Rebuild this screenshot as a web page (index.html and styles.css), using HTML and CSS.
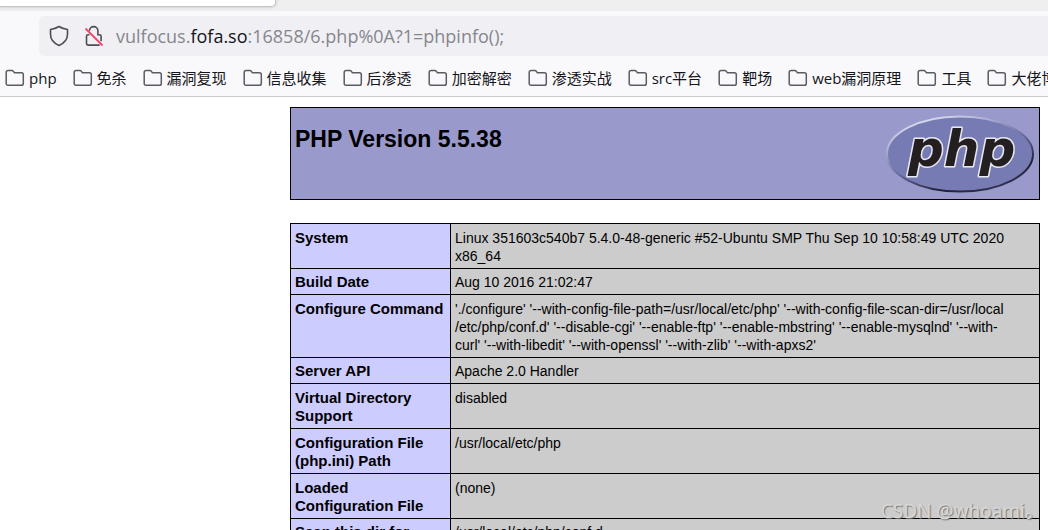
FILE: index.html
```html
<!DOCTYPE html>
<html lang="zh-CN">
<head>
<meta charset="utf-8">
<title>phpinfo()</title>
<link rel="stylesheet" href="styles.css">
</head>
<body>
<svg class="defs" aria-hidden="true">
  <symbol id="folder" viewBox="0 0 20 18">
    <path d="M3.200 1.500h3.600c.7 0 1.200.3 1.600.9l1 1.400h7.100c1.100 0 1.800.7 1.800 1.800v8.900c0 1.100-.7 1.800-1.800 1.800H3c-1.100 0-1.800-.7-1.800-1.800V3.300c0-1.100.7-1.800 2-1.800z" fill="none" stroke="#5b5b66" stroke-width="1.500"/>
  </symbol>
</svg>
<header class="browser">
  <div class="tabs"><div class="tab"></div></div>
  <div class="toolbar">
    <div class="address">
      <svg class="shield" viewBox="0 0 20 22" aria-hidden="true">
        <path d="M10 1.500C7.500 3.200 4.700 4.100 1.500 4.500v4.800c0 5 3 8.800 8.500 11.200 5.500-2.400 8.500-6.200 8.500-11.200V4.500C15.300 4.100 12.500 3.200 10 1.500z" fill="none" stroke="#4c4c55" stroke-width="1.600" stroke-linejoin="round"/>
      </svg>
      <svg class="lock" viewBox="0 0 20 22" aria-hidden="true">
        <g fill="none" stroke="#4c4c55" stroke-width="1.600">
          <path d="M5.500 5.800a4.200 4.200 0 0 1 8.400 0v3.900h1.600c1 0 1.600.6 1.600 1.600v5"/>
          <path d="M5.500 9.700H4.100c-1 0-1.600.6-1.600 1.600v7.200c0 1 .6 1.600 1.600 1.600h11.500"/>
        </g>
        <path d="M1.500 3.500l17 17" stroke="#f2426b" stroke-width="1.800"/>
      </svg>
      <div class="url" role="textbox" aria-label="Address" contenteditable="true" spellcheck="false">vulfocus.<span class="domain">fofa.so</span>:16858/6.php%0A?1=phpinfo();</div>
    </div>
  </div>
  <nav class="bookmarks">
    <button class="bookmark"><svg><use href="#folder"/></svg>php</button>
    <button class="bookmark"><svg><use href="#folder"/></svg>免杀</button>
    <button class="bookmark"><svg><use href="#folder"/></svg>漏洞复现</button>
    <button class="bookmark"><svg><use href="#folder"/></svg>信息收集</button>
    <button class="bookmark"><svg><use href="#folder"/></svg>后渗透</button>
    <button class="bookmark"><svg><use href="#folder"/></svg>加密解密</button>
    <button class="bookmark"><svg><use href="#folder"/></svg>渗透实战</button>
    <button class="bookmark"><svg><use href="#folder"/></svg>src平台</button>
    <button class="bookmark"><svg><use href="#folder"/></svg>靶场</button>
    <button class="bookmark"><svg><use href="#folder"/></svg>web漏洞原理</button>
    <button class="bookmark"><svg><use href="#folder"/></svg>工具</button>
    <button class="bookmark"><svg><use href="#folder"/></svg>大佬博客</button>
  </nav>
</header>
<main class="page">
  <div class="banner">
    <h1>PHP Version 5.5.38</h1>
    <svg class="logo" viewBox="0 0 150 80" role="img" aria-label="PHP logo">
      <defs>
        <linearGradient id="rim" x1="0.200" y1="0" x2="0.800" y2="1">
          <stop offset="0" stop-color="#e4e6f4"/>
          <stop offset="0.250" stop-color="#a9acd2"/>
          <stop offset="0.500" stop-color="#6a6e9c"/>
          <stop offset="0.800" stop-color="#1f2038"/>
          <stop offset="1" stop-color="#34365a"/>
        </linearGradient>
      </defs>
      <ellipse cx="75" cy="40" rx="73" ry="37.500" fill="#777bb3" stroke="url(#rim)" stroke-width="2"/>
      <text class="logo-text" x="23" y="52">php</text>
    </svg>
  </div>
  <table class="info">
    <colgroup><col class="key-col"><col></colgroup>
    <tbody>
    <tr class="multi"><th scope="row">System</th><td>Linux 351603c540b7 5.4.0-48-generic #52-Ubuntu SMP Thu Sep 10 10:58:49 UTC 2020 x86_64</td></tr>
    <tr><th scope="row">Build Date</th><td>Aug 10 2016 21:02:47</td></tr>
    <tr class="multi"><th scope="row">Configure Command</th><td>'./configure' '--with-config-file-path=/usr/local/etc/php' '--with-config-file-scan-dir=/usr/local<wbr>/etc/php/conf.d' '--disable-cgi' '--enable-ftp' '--enable-mbstring' '--enable-mysqlnd' '--with-<wbr>curl' '--with-libedit' '--with-openssl' '--with-zlib' '--with-apxs2'</td></tr>
    <tr><th scope="row">Server API</th><td>Apache 2.0 Handler</td></tr>
    <tr class="multi"><th scope="row">Virtual Directory Support</th><td>disabled</td></tr>
    <tr class="multi"><th scope="row">Configuration File (php.ini) Path</th><td>/usr/local/etc/php</td></tr>
    <tr class="multi"><th scope="row">Loaded Configuration File</th><td>(none)</td></tr>
    <tr><th scope="row">Scan this dir for additional .ini files</th><td>/usr/local/etc/php/conf.d</td></tr>
    </tbody>
  </table>
</main>
<div class="watermark">CSDN @whoami。</div>
</body>
</html>
```
FILE: styles.css
```css
* { box-sizing: border-box; }
html { height: 100%; overflow: hidden; }
body {
  position: relative;
  height: 100%;
  margin: 0;
  overflow: hidden;
  background: #fff;
  color: #000;
  font-family: "Liberation Sans", Arial, sans-serif;
}
.defs { display: none; }

.browser {
  background: #f9f9fb;
  border-bottom: 1px solid #cccccf;
  font-family: "Open Sans", "Noto Sans CJK SC", sans-serif;
}
.tabs {
  height: 11px;
  background: #efefef;
}
.tab {
  width: 276px;
  height: 7px;
  background: #fff;
  border: 1px solid #c4c4cb;
  border-width: 0 1px 1px 0;
  border-radius: 0 0 5px 0;
  box-shadow: 0 0 3px #bbb;
}
.toolbar { padding: 5px 0 5px 39px; }
.address {
  display: flex;
  align-items: center;
  height: 40px;
  padding-left: 10px;
  background: #f0f0f4;
  border-radius: 5px 0 0 5px;
}
.shield, .lock { width: 20px; height: 22px; flex: none; }
.lock { margin-left: 15px; }
.url {
  flex: 1;
  margin-left: 12px;
  color: #86868d;
  font-size: 18px;
  line-height: 24px;
  white-space: nowrap;
  outline: none;
}
.domain { color: #15141a; }

.bookmarks {
  display: flex;
  gap: 16px;
  height: 35px;
  padding: 0 0 2px 5px;
  overflow: hidden;
}
.bookmark {
  display: flex;
  flex: none;
  align-items: center;
  gap: 4px;
  padding: 0;
  border: 0;
  background: none;
  color: #15141a;
  font: 15px/20px "Open Sans", "Noto Sans CJK SC", sans-serif;
}
.bookmark svg { width: 20px; height: 18px; }

.page {
  width: calc(100% - 298px);
  margin: 10px 8px 0 auto;
}
.banner {
  display: flex;
  justify-content: space-between;
  align-items: flex-start;
  height: 93px;
  padding: 6px 4px 0 4px;
  border: 1px solid #000;
  background: #9999cc;
}
.banner h1 {
  margin: 11px 0 0;
  font-size: 23px;
  line-height: 28px;
}
.logo { width: 150px; height: 80px; }
.logo-text {
  font: italic bold 50px "DejaVu Sans", sans-serif;
  fill: #231f20;
  stroke: #e8e8f2;
  stroke-width: 3px;
  stroke-linejoin: round;
  paint-order: stroke;
}

.info {
  width: 100%;
  margin-top: 23px;
  border-collapse: collapse;
  table-layout: fixed;
  font-size: 15px;
  line-height: 18px;
}
.key-col { width: 160px; }
.info th, .info td {
  padding: 4px 4px 3px;
  border: 1px solid #000;
  text-align: left;
  vertical-align: top;
}
.info .multi th, .info .multi td { padding-top: 5px; }
.info th { background: #ccccff; }
.info td {
  padding-right: 20px;
  background: #cccccc;
  font-size: 14px;
}

.watermark {
  position: absolute;
  right: 4px;
  bottom: 4px;
  color: #d8d8d8;
  font: 19px/30px "Noto Sans", "Noto Sans CJK SC", sans-serif;
  text-shadow: 1px 1px 1px #777;
}
```
